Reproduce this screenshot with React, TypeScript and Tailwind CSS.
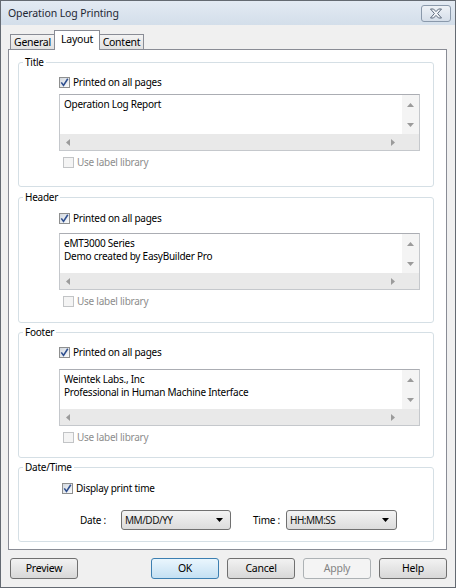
import React from "react";

function CheckBox({ checked = false, disabled = false }: { checked?: boolean; disabled?: boolean }) {
  return (
    <span
      className={
        disabled
          ? "flex h-[11px] w-[11px] shrink-0 items-center justify-center border border-[#c2c4c6] bg-[#f4f4f4]"
          : "flex h-[11px] w-[11px] shrink-0 items-center justify-center border border-[#8e8f8f] bg-gradient-to-br from-[#d3d9e0] to-[#fafbfc]"
      }
    >
      {checked && (
        <svg width="9" height="9" viewBox="0 0 9 9">
          <path d="M1.3 4.4 L3.5 7.4 L7.8 0.8" fill="none" stroke="#2f4f8f" strokeWidth="1.6" />
        </svg>
      )}
    </span>
  );
}

function CheckRow({
  label,
  checked,
  disabled,
  className,
}: {
  label: string;
  checked?: boolean;
  disabled?: boolean;
  className: string;
}) {
  return (
    <div className={"flex h-[14px] items-center gap-[3px] " + className}>
      <CheckBox checked={checked} disabled={disabled} />
      <span className={disabled ? "leading-[14px] text-[#8d8d8d]" : "leading-[14px]"}>{label}</span>
    </div>
  );
}

function ArrowUp() {
  return (
    <svg width="7" height="4" viewBox="0 0 7 4">
      <polygon points="0,4 7,4 3.5,0" fill="#9b9b9b" />
    </svg>
  );
}
function ArrowDown() {
  return (
    <svg width="7" height="4" viewBox="0 0 7 4">
      <polygon points="0,0 7,0 3.5,4" fill="#9b9b9b" />
    </svg>
  );
}
function ArrowLeft() {
  return (
    <svg width="4" height="7" viewBox="0 0 4 7">
      <polygon points="4,0 4,7 0,3.5" fill="#9b9b9b" />
    </svg>
  );
}
function ArrowRight() {
  return (
    <svg width="4" height="7" viewBox="0 0 4 7">
      <polygon points="0,0 0,7 4,3.5" fill="#9b9b9b" />
    </svg>
  );
}

function TextBox({ lines, className }: { lines: string[]; className: string }) {
  return (
    <div
      className={
        "ml-[40px] flex h-[57px] w-[361px] flex-col border border-[#c5c8cc] border-t-[#abadb3] " + className
      }
    >
      <div className="flex min-h-0 flex-1">
        <div className="flex-1 bg-white pl-[4px] pt-[3px] leading-[13px]">
          {lines.map((l) => (
            <div key={l}>{l}</div>
          ))}
        </div>
        <div className="flex w-[17px] flex-col items-center justify-between bg-[#f4f4f4] pb-[7px] pt-[8px]">
          <ArrowUp />
          <ArrowDown />
        </div>
      </div>
      <div className="flex h-[16px]">
        <div className="flex flex-1 items-center justify-between bg-[#e9e9e9] pl-[6px] pr-[7px]">
          <ArrowLeft />
          <ArrowRight />
        </div>
        <div className="w-[17px] bg-[#e9e9e9]" />
      </div>
    </div>
  );
}

function Group({ label, className, children }: { label: string; className: string; children: React.ReactNode }) {
  return (
    <div className={"relative ml-[9px] w-[416px] rounded-[3px] border border-[#d5dfe5] " + className}>
      <span className="absolute left-[4px] top-[-8px] bg-white px-[2px] leading-[14px]">{label}</span>
      {children}
    </div>
  );
}

function Combo({ value, className }: { value: string; className: string }) {
  return (
    <div
      className={
        "flex h-[20px] items-center justify-between rounded-[3px] border border-[#707070] bg-gradient-to-b from-[#f3f3f3] to-[#dcdcdc] pl-[3px] pr-[7px] " +
        className
      }
    >
      <span className="leading-[14px] tracking-[-0.5px] text-[#111]">{value}</span>
      <svg width="7" height="4" viewBox="0 0 7 4">
        <polygon points="0,0 7,0 3.5,4" fill="#000" />
      </svg>
    </div>
  );
}

function Btn({ label, className }: { label: string; className: string }) {
  return (
    <div
      className={
        "flex h-[21px] w-[68px] items-center justify-center rounded-[3px] border text-[10.5px] " + className
      }
    >
      {label}
    </div>
  );
}

export default function App() {
  return (
    <div className="flex h-[588px] w-[456px] flex-col border border-[#646a72] bg-[#f0f0f0] font-['Noto_Sans','Open_Sans',sans-serif] text-[10px] tracking-[-0.25px] text-black">
      {/* title bar */}
      <div className="flex h-[24px] items-start justify-between bg-gradient-to-b from-[#e3eaf3] to-[#d3deea] pl-[7px] pr-[4px]">
        <span className="mt-[4px] text-[10.5px] leading-[16px] tracking-[-0.1px] text-[#1e2733]">
          Operation Log Printing
        </span>
        <div className="mt-[4px] flex h-[17px] w-[30px] items-center justify-center rounded-[3px] border border-[#8a99ab] bg-gradient-to-b from-[#eef2f7] to-[#d5dee9]">
          <svg width="14" height="11" viewBox="0 0 14 11">
            <path
              d="M1.5 1 H4.5 L7 3.6 L9.5 1 H12.5 L8.6 5.5 L12.5 10 H9.5 L7 7.4 L4.5 10 H1.5 L5.4 5.5 Z"
              fill="#f4f6f9"
              stroke="#5d6b7d"
              strokeWidth="1"
              strokeLinejoin="round"
            />
          </svg>
        </div>
      </div>

      {/* tabs */}
      <div className="mt-[5px] flex items-end pl-[9px] text-[10.5px]">
        <div className="flex h-[15px] w-[44px] items-center justify-center border-l border-t border-[#898c95] bg-gradient-to-b from-[#f3f3f3] to-[#e1e1e1] leading-[13px]">
          General
        </div>
        <div className="relative z-10 -mb-[1px] flex h-[20px] w-[46px] items-start justify-center border-l border-r border-t border-[#898c95] bg-white pt-[2px] leading-[13px]">
          Layout
        </div>
        <div className="flex h-[15px] w-[44px] items-center justify-center border-r border-t border-[#898c95] bg-gradient-to-b from-[#f3f3f3] to-[#e1e1e1] leading-[13px]">
          Content
        </div>
      </div>

      {/* panel */}
      <div className="ml-[7px] flex h-[501px] w-[439px] flex-col border border-[#898c95] bg-white pt-[12px]">
        <Group label="Title" className="h-[125px] pt-[12px]">
          <CheckRow label="Printed on all pages" checked className="ml-[40px]" />
          <TextBox lines={["Operation Log Report"]} className="mt-[5px]" />
          <CheckRow label="Use label library" disabled className="ml-[44px] mt-[4px]" />
        </Group>

        <Group label="Header" className="mt-[10px] h-[126px] pt-[13px]">
          <CheckRow label="Printed on all pages" checked className="ml-[40px]" />
          <TextBox lines={["eMT3000 Series", "Demo created by EasyBuilder Pro"]} className="mt-[8px]" />
          <CheckRow label="Use label library" disabled className="ml-[44px] mt-[4px]" />
        </Group>

        <Group label="Footer" className="mt-[9px] h-[126px] pt-[12px]">
          <CheckRow label="Printed on all pages" checked className="ml-[40px]" />
          <TextBox
            lines={["Weintek Labs., Inc", "Professional in Human Machine Interface"]}
            className="mt-[10px]"
          />
          <CheckRow label="Use label library" disabled className="ml-[44px] mt-[4px]" />
        </Group>

        <Group label="Date/Time" className="mt-[9px] h-[75px] pt-[13px]">
          <CheckRow label="Display print time" checked className="ml-[43px]" />
          <div className="mt-[15px] flex items-center pl-[61px]">
            <span className="w-[41px] leading-[14px]">Date :</span>
            <Combo value="MM/DD/YY" className="w-[110px]" />
            <span className="ml-[22px] w-[33px] leading-[14px]">Time :</span>
            <Combo value="HH:MM:SS" className="w-[111px]" />
          </div>
        </Group>
      </div>

      {/* buttons */}
      <div className="mt-[8px] flex items-center pl-[9px]">
        <Btn label="Preview" className="border-[#707070] bg-gradient-to-b from-[#f2f2f2] to-[#d8d8d8]" />
        <Btn label="OK" className="ml-[73px] border-[#3c7fb1] bg-gradient-to-b from-[#eaf6fd] to-[#c4e0f3]" />
        <Btn label="Cancel" className="ml-[8px] border-[#707070] bg-gradient-to-b from-[#f2f2f2] to-[#d8d8d8]" />
        <Btn label="Apply" className="ml-[8px] border-[#adb2b5] bg-[#f4f4f4] text-[#838383]" />
        <Btn label="Help" className="ml-[8px] border-[#707070] bg-gradient-to-b from-[#f2f2f2] to-[#d8d8d8]" />
      </div>
    </div>
  );
}
